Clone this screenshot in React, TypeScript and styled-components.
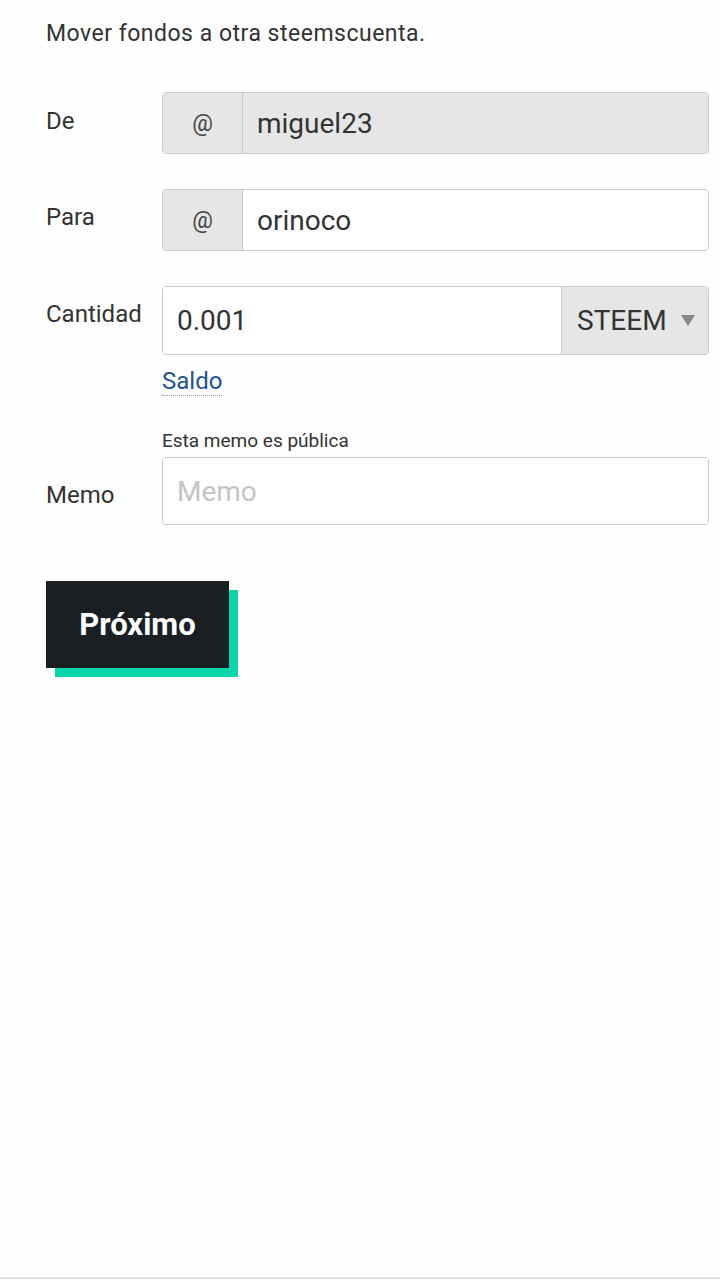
import styled, { createGlobalStyle } from 'styled-components';

const GlobalStyle = createGlobalStyle`
  html, body {
    margin: 0;
    padding: 0;
    background: #fefefe;
  }
  body {
    font-family: Roboto, "Noto Sans", sans-serif;
    color: #333;
  }
`;

const Page = styled.div`
  min-height: 1279px;
  box-sizing: border-box;
  padding: 17px 11px 0 46px;
  border-bottom: 2px solid #e4e4e4;
`;

const Intro = styled.p`
  margin: 0 0 42px 0;
  font-size: 23px;
  letter-spacing: 0.5px;
  line-height: 33px;
`;

const Row = styled.div<{ gap?: number }>`
  display: flex;
  align-items: flex-start;
  margin-bottom: ${({ gap }) => (gap ?? 35)}px;
`;

const Label = styled.label<{ top?: number }>`
  flex: 0 0 116px;
  padding-top: ${({ top }) => (top ?? 13)}px;
  font-size: 24px;
  line-height: 33px;
`;

const Field = styled.div`
  flex: 1;
  display: flex;
  flex-direction: column;
`;

const Group = styled.div<{ h?: number }>`
  display: flex;
  height: ${({ h }) => h ?? 62}px;
  box-sizing: border-box;
  border: 1px solid #cacaca;
  border-radius: 4px;
  overflow: hidden;
  background: #fff;
`;

const Addon = styled.span`
  flex: 0 0 79px;
  display: flex;
  align-items: center;
  justify-content: center;
  background: #e6e6e6;
  border-right: 1px solid #cacaca;
  font-size: 23px;
  color: #444;
`;

const Value = styled.div<{ disabled?: boolean }>`
  flex: 1;
  display: flex;
  align-items: center;
  padding-left: 14px;
  font-size: 28px;
  color: #333;
  background: ${({ disabled }) => (disabled ? '#e6e6e6' : '#fff')};
`;

const Select = styled.div`
  flex: 0 0 147px;
  display: flex;
  align-items: center;
  padding-left: 15px;
  box-sizing: border-box;
  background: #e6e6e6;
  border-left: 1px solid #cacaca;
  font-size: 28px;
  color: #333;
`;

const Caret = styled.span`
  margin-left: 14px;
  width: 0;
  height: 0;
  border-left: 7px solid transparent;
  border-right: 7px solid transparent;
  border-top: 11px solid #888;
`;

const Balance = styled.a`
  align-self: flex-start;
  margin-top: 12px;
  font-size: 24px;
  line-height: 28px;
  color: #1f5592;
  text-decoration: none;
  border-bottom: 1px dotted #999;
`;

const Hint = styled.div`
  font-size: 19px;
  line-height: 24px;
  margin-top: 3px;
  margin-bottom: 4px;
  color: #333;
`;

const Placeholder = styled(Value)`
  color: #c4c4c4;
`;

const Button = styled.button`
  display: block;
  margin-top: 56px;
  width: 183px;
  height: 87px;
  padding: 0;
  border: none;
  background: #1a1f24;
  color: #fff;
  font-family: Roboto, "Noto Sans", sans-serif;
  font-weight: 700;
  font-size: 31px;
  box-shadow: 9px 9px 0 #06d6a9;
  cursor: pointer;
`;

export default function App() {
  return (
    <>
      <GlobalStyle />
      <Page>
        <Intro>Mover fondos a otra steemscuenta.</Intro>

        <Row>
          <Label>De</Label>
          <Field>
            <Group>
              <Addon>@</Addon>
              <Value disabled>miguel23</Value>
            </Group>
          </Field>
        </Row>

        <Row>
          <Label top={12}>Para</Label>
          <Field>
            <Group>
              <Addon>@</Addon>
              <Value>orinoco</Value>
            </Group>
          </Field>
        </Row>

        <Row gap={30}>
          <Label top={12}>Cantidad</Label>
          <Field>
            <Group h={69}>
              <Value>0.001</Value>
              <Select>
                STEEM
                <Caret />
              </Select>
            </Group>
            <Balance>Saldo</Balance>
          </Field>
        </Row>

        <Row gap={0}>
          <Label top={53}>Memo</Label>
          <Field>
            <Hint>Esta memo es pública</Hint>
            <Group h={68}>
              <Placeholder>Memo</Placeholder>
            </Group>
          </Field>
        </Row>

        <Button>Próximo</Button>
      </Page>
    </>
  );
}
